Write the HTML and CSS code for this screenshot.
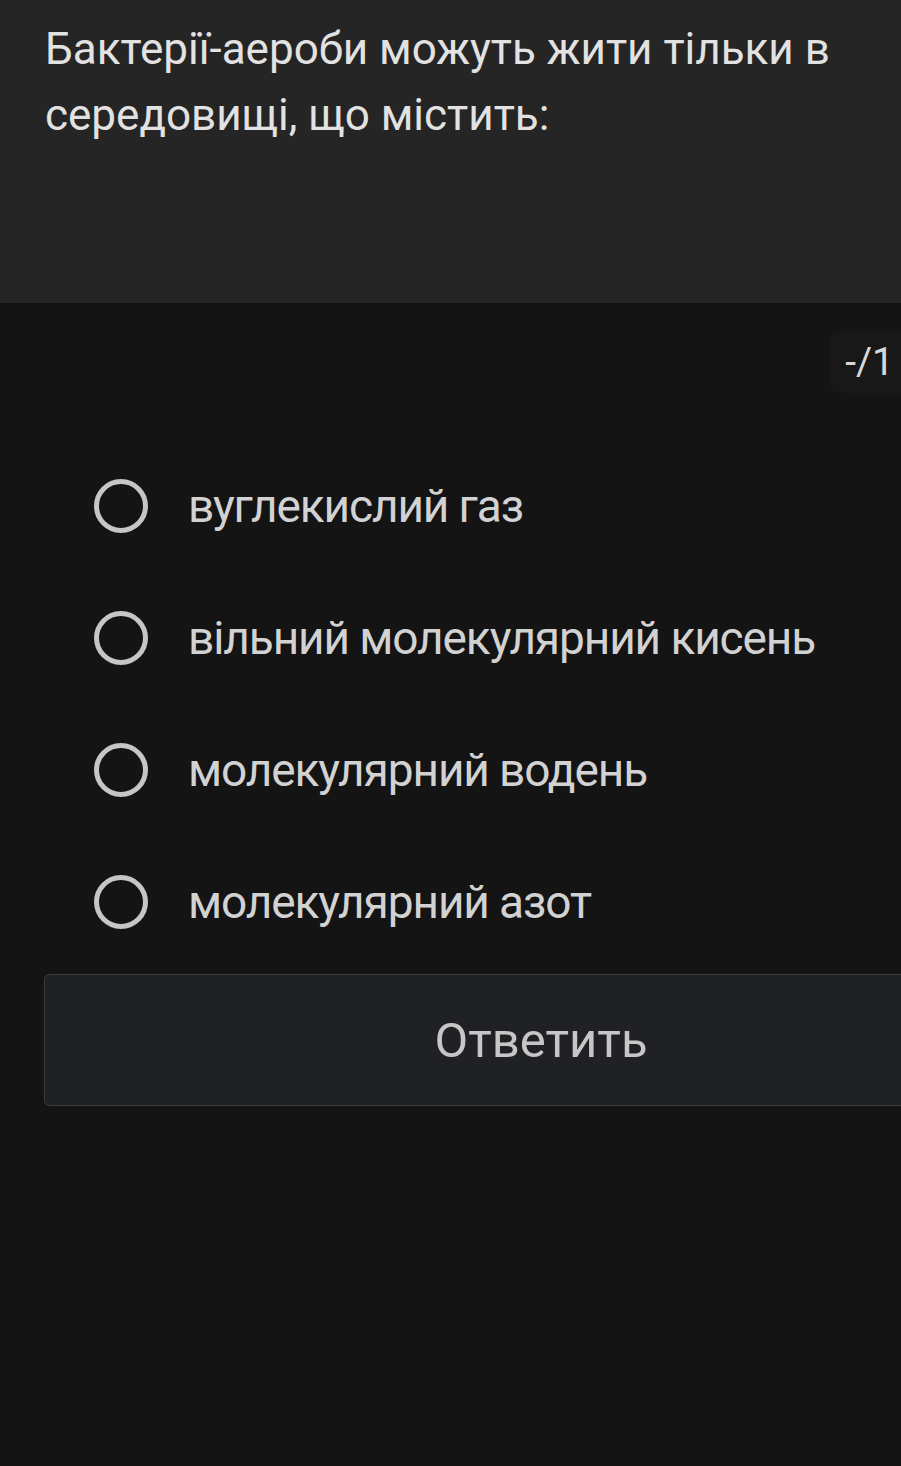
FILE: index.html
```html
<!DOCTYPE html>
<html lang="uk">
<head>
<meta charset="utf-8">
<link rel="stylesheet" href="styles.css">
</head>
<body>
<div class="page">
  <header class="question">
    <p class="question-text">Бактерії-аероби можуть жити тільки в середовищі, що містить:</p>
  </header>
  <div class="score-row">
    <span class="score">-/1</span>
  </div>
  <ul class="options">
    <li class="option"><span class="radio"></span><span class="label">вуглекислий газ</span></li>
    <li class="option"><span class="radio"></span><span class="label">вільний молекулярний кисень</span></li>
    <li class="option"><span class="radio"></span><span class="label">молекулярний водень</span></li>
    <li class="option"><span class="radio"></span><span class="label">молекулярний азот</span></li>
  </ul>
  <div class="actions">
    <button class="answer-btn">Ответить</button>
  </div>
</div>
</body>
</html>
```
FILE: styles.css
```css
html, body {
  margin: 0;
  padding: 0;
  background: #141414;
  overflow: hidden;
}
body {
  width: 901px;
  height: 1466px;
  font-family: Roboto, "Noto Sans", sans-serif;
}
.page {
  width: 901px;
  overflow: hidden;
}
.question {
  background: #252525;
  height: 303px;
  padding: 16px 40px 0 45px;
  box-sizing: border-box;
}
.question-text {
  margin: 0;
  font-size: 44px;
  line-height: 66px;
  color: #e2e2e2;
}
.score-row {
  display: flex;
  justify-content: flex-end;
  margin-top: 28px;
  height: 62px;
}
.score {
  background: #181818;
  color: #d8d8d8;
  font-size: 39px;
  line-height: 62px;
  padding: 0 7px 0 16px;
  border-radius: 12px 0 0 12px;
}
.options {
  list-style: none;
  margin: 0;
  padding: 0;
  margin-top: 47px;
}
.option {
  display: flex;
  align-items: center;
  height: 132px;
  padding-left: 94px;
}
.radio {
  width: 54px;
  height: 54px;
  box-sizing: border-box;
  border: 5px solid #c6c6c6;
  border-radius: 50%;
  flex: none;
}
.label {
  margin-left: 40px;
  font-size: 46px;
  letter-spacing: -1.1px;
  color: #d2d2d2;
}
.actions {
  padding-left: 44px;
  margin-top: 6px;
}
.answer-btn {
  width: 994px;
  height: 132px;
  background: #202125;
  border: 1px solid #3a3b3e;
  border-radius: 5px;
  color: #c6c6c6;
  font-family: Roboto, "Noto Sans", sans-serif;
  font-size: 49px;
  padding: 0;
}
```
